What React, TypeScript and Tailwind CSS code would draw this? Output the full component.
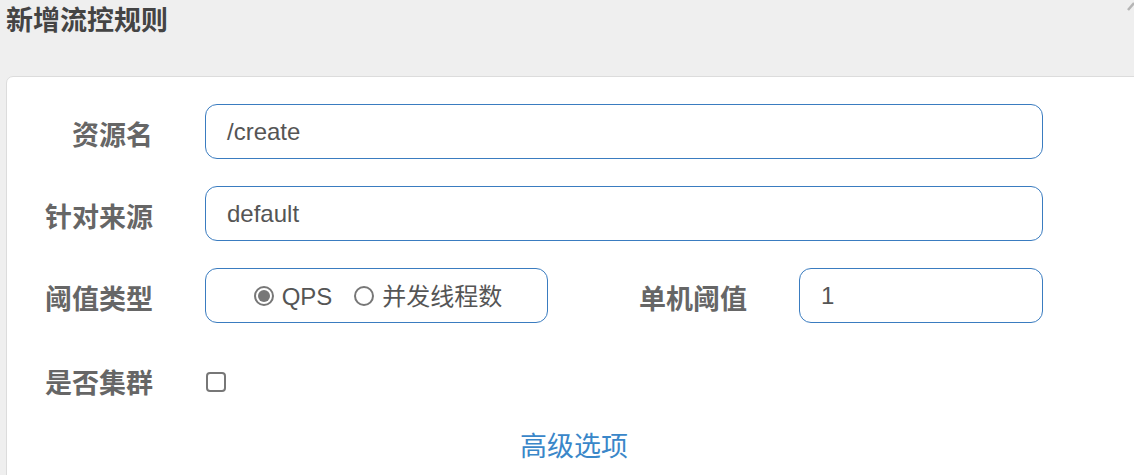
import React from "react";

const font = { fontFamily: '"Liberation Sans", "Noto Sans CJK SC", sans-serif' };

function Label({ children }: { children: React.ReactNode }) {
  return (
    <div className="w-[146px] shrink-0 text-right text-[27px] font-bold leading-none text-[#666] pt-[9px]">
      {children}
    </div>
  );
}

function Field({ value, className = "" }: { value: string; className?: string }) {
  return (
    <div
      className={`h-[55px] rounded-[12px] border border-[#3a7cc0] bg-white px-[21px] flex items-center text-[24px] text-[#555] ${className}`}
    >
      {value}
    </div>
  );
}

function Radio({ checked }: { checked?: boolean }) {
  return (
    <span className="w-[20px] h-[20px] rounded-full border-2 border-[#777] flex items-center justify-center shrink-0">
      {checked && <span className="w-[12px] h-[12px] rounded-full bg-[#777]" />}
    </span>
  );
}

export default function App() {
  return (
    <div className="relative w-full h-[475px] overflow-hidden bg-[#efefef]" style={font}>
      {/* close mark, mostly off screen */}
      <svg className="absolute top-0 right-0" width="8" height="14" viewBox="0 0 8 14">
        <path d="M2 10 L8 3" stroke="#b5b5b5" strokeWidth="2.5" />
      </svg>

      <h1 className="pl-[6px] pt-[6px] text-[27px] font-bold leading-[30px] text-[#444]">新增流控规则</h1>

      <div className="mt-[40px] ml-[6px] mr-[-12px] bg-white border border-[#dcdcdc] rounded-[7px] pt-[27px] pb-[40px]">
        <div className="flex flex-col gap-[27px]">
          <div className="flex items-center gap-[52px]">
            <Label>资源名</Label>
            <Field value="/create" className="w-[838px]" />
          </div>

          <div className="flex items-center gap-[52px]">
            <Label>针对来源</Label>
            <Field value="default" className="w-[838px]" />
          </div>

          <div className="flex items-center">
            <Label>阈值类型</Label>
            <div className="ml-[52px] w-[343px] h-[55px] rounded-[12px] border border-[#3a7cc0] flex items-center justify-center pl-[3px] text-[24px] text-[#555]">
              <Radio checked />
              <span className="ml-[8px] pt-[2px]">QPS</span>
              <span className="ml-[22px]">
                <Radio />
              </span>
              <span className="ml-[8px] pt-[2px]">并发线程数</span>
            </div>
            <div className="w-[199px] text-right text-[27px] font-bold leading-none text-[#666] pt-[9px]">单机阈值</div>
            <Field value="1" className="ml-[52px] w-[244px]" />
          </div>

          <div className="flex items-center h-[59px]">
            <Label>是否集群</Label>
            <span className="ml-[53px] mt-[4px] w-[20px] h-[20px] rounded-[4px] border-2 border-[#777] bg-white" />
          </div>
        </div>

        <div className="mt-[19px] text-center text-[27px] leading-[39px] text-[#3a87c9] pr-[4px]">高级选项</div>
      </div>
    </div>
  );
}
